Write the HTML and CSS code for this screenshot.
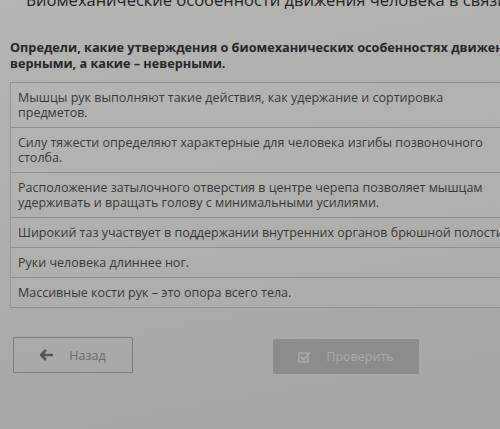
FILE: index.html
```html
<!DOCTYPE html>
<html lang="ru">
<head>
<meta charset="utf-8">
<link rel="stylesheet" href="styles.css">
</head>
<body>
<div class="page">
  <h1 class="title">Биомеханические особенности движения человека в связи с прямохождением</h1>
  <p class="task">Определи, какие утверждения о биомеханических особенностях движения человека являются<br>верными, а какие – неверными.</p>
  <ul class="list">
    <li class="item">Мышцы рук выполняют такие действия, как удержание и сортировка предметов.</li>
    <li class="item">Силу тяжести определяют характерные для человека изгибы позвоночного столба.</li>
    <li class="item">Расположение затылочного отверстия в центре черепа позволяет мышцам удерживать и вращать голову с минимальными усилиями.</li>
    <li class="item">Широкий таз участвует в поддержании внутренних органов брюшной полости.</li>
    <li class="item">Руки человека длиннее ног.</li>
    <li class="item">Массивные кости рук – это опора всего тела.</li>
  </ul>
  <div class="actions">
    <button class="btn btn-back">
      <svg class="icon" width="14" height="12" viewBox="0 0 14 12"><path d="M6 1 L1 6 L6 11 M1.5 6 H13" fill="none" stroke="#555" stroke-width="2.6" stroke-linejoin="miter"/></svg>
      <span>Назад</span>
    </button>
    <button class="btn btn-check">
      <svg class="icon" width="13" height="12" viewBox="0 0 13 12"><rect x="1" y="2" width="9" height="9" fill="none" stroke="#aaa" stroke-width="1.4"/><path d="M3 6 L5.5 8.5 L12 1.5" fill="none" stroke="#aaa" stroke-width="1.8"/></svg>
      <span>Проверить</span>
    </button>
  </div>
</div>
</body>
</html>
```

FILE: styles.css
```css
html, body {
  margin: 0;
  padding: 0;
  width: 500px;
  height: 429px;
  overflow: hidden;
}
body {
  background: linear-gradient(170deg, #b4b4b2 0%, #acacaa 55%, #a5a5a3 100%);
  font-family: "Open Sans", "Noto Sans", sans-serif;
  color: #333;
}
.page {
  padding: 0 0 0 10px;
  width: 900px;
}
.title {
  margin: -12.5px 0 0 16px;
  font-size: 16.5px;
  line-height: 24px;
  font-weight: 400;
  color: #232323;
  white-space: nowrap;
}
.task {
  margin: 27.5px 0 0 0;
  font-size: 12.7px;
  line-height: 16px;
  font-weight: 700;
  color: #262626;
  white-space: nowrap;
}
.list {
  list-style: none;
  margin: 11px 0 0 0;
  padding: 0;
  width: 510px;
  border-top: 1px solid #8f8f8d;
  border-left: 1px solid #9a9a98;
}
.item {
  padding: 7px 14px 7px 7px;
  font-size: 12.5px;
  line-height: 15px;
  color: #383838;
  border-bottom: 1px solid #8f8f8d;
  background: rgba(255, 255, 255, 0.04);
}
.actions {
  display: flex;
  align-items: flex-start;
  gap: 140px;
  margin: 29px 0 0 3px;
}
.btn {
  display: flex;
  align-items: center;
  justify-content: center;
  gap: 15px;
  font-family: "Open Sans", "Noto Sans", sans-serif;
  font-size: 12.5px;
  padding: 0;
  border-radius: 1px;
}
.btn-back {
  width: 120px;
  height: 36px;
  background: transparent;
  border: 1px solid #7c7c7a;
  color: #6a6a6a;
}
.btn-check {
  margin-top: 2px;
  width: 146px;
  height: 35px;
  background: #8c8c8b;
  border: none;
  color: #aaaaa9;
}
.icon {
  display: block;
}
```
